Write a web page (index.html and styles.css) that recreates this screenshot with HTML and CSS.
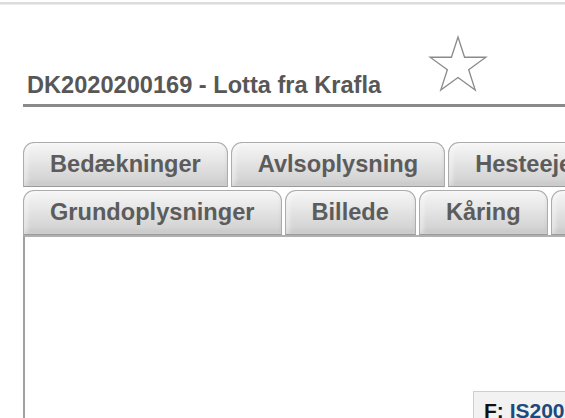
FILE: index.html
```html
<!DOCTYPE html>
<html lang="da">
<head>
  <meta charset="UTF-8" />
  <meta name="viewport" content="width=device-width, initial-scale=1.0"/>
  <title>DK2020200169 - Lotta fra Krafla</title>
  <link rel="stylesheet" href="styles.css">
</head>
<body>
  <div class="topbar"></div>

  <div class="page">
    <div class="header">
      <h1>DK2020200169 - Lotta fra Krafla</h1>
      <svg class="star" width="60" height="58" viewBox="0 0 60 58">
        <path d="M30 2 L36.58 22.24 L57.87 22.25 L40.65 34.76 L47.22 55 L30 42.5 L12.78 55 L19.35 34.76 L2.13 22.25 L23.42 22.24 Z"
              fill="none" stroke="#8a8a8a" stroke-width="1.3" stroke-linejoin="miter"/>
      </svg>
    </div>

    <!-- faner -->
    <div class="tabs">
      <div class="tab-row">
        <div class="tab">Bedækninger</div>
        <div class="tab">Avlsoplysning</div>
        <div class="tab">Hesteejere</div>
      </div>
      <div class="tab-row">
        <div class="tab">Grundoplysninger</div>
        <div class="tab">Billede</div>
        <div class="tab">Kåring</div>
        <div class="tab">Afkom</div>
      </div>
    </div>

    <div class="panel">
      <div class="parent-box">
        <span class="label">F:</span> <span class="reg">IS2005125430</span>
      </div>
    </div>
  </div>
</body>
</html>
```

FILE: styles.css
```css
  * {
    box-sizing: border-box;
  }

  html, body {
    overflow: hidden;
  }

  body {
    margin: 0;
    padding: 0;
    background: #fff;
    font-family: 'Liberation Sans', Arial, Helvetica, sans-serif;
    color: #5a5a5a;
  }

  .topbar {
    margin-top: 2px;
    height: 3px;
    background: #dcdcdc;
    border-bottom: 1px solid #ececec;
  }

  .page {
    padding-left: 23px;
    width: 900px;
  }

  .header {
    display: flex;
    align-items: flex-end;
    padding: 30px 0 7px 4px;
    border-bottom: 3px solid #8a8a8a;
  }

  h1 {
    margin: 0;
    font-size: 23.6px;
    line-height: 24px;
    font-weight: bold;
    color: #575757;
    white-space: nowrap;
  }

  .star {
    display: block;
    margin-left: 47px;
    margin-bottom: 4px;
  }

  .tabs {
    margin-top: 35px;
    display: flex;
    flex-direction: column;
    gap: 3px;
  }

  .tab-row {
    display: flex;
    gap: 3px;
  }

  .tab {
    height: 45px;
    padding: 0 26px;
    display: flex;
    align-items: center;
    white-space: nowrap;
    font-size: 23.6px;
    font-weight: bold;
    color: #5c5c5c;
    border: 1px solid #acacac;
    border-bottom-color: #9a9a9a;
    border-radius: 11px 11px 0 0;
    background: linear-gradient(to bottom, #f6f6f6 0%, #e9e9e9 35%, #dadada 70%, #cfcfcf 100%);
    box-shadow: inset 0 -3px 4px rgba(0, 0, 0, 0.07), inset 3px 0 4px rgba(255, 255, 255, 0.6);
  }

  .panel {
    border-top: 2px solid #b0b0b0;
    border-left: 2px solid #a0a0a0;
    height: 300px;
    padding-top: 154px;
    padding-left: 448px;
  }

  .parent-box {
    display: inline-block;
    white-space: nowrap;
    padding: 7px 10px;
    border: 1px solid #cfcfcf;
    background: #f2f2f2;
    font-size: 21px;
    font-weight: bold;
  }

  .label {
    color: #111;
  }

  .reg {
    color: #1c4a7c;
  }
```
